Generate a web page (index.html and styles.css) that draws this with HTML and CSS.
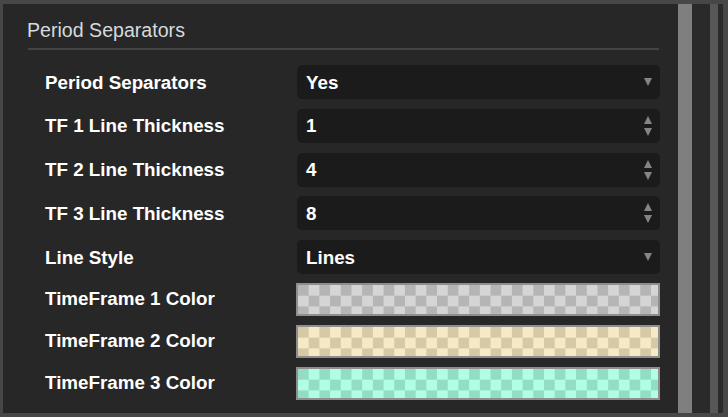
FILE: index.html
```html
<!DOCTYPE html>
<html>
<head>
<meta charset="utf-8">
<link rel="stylesheet" href="styles.css">
</head>
<body>
<div class="frame">
  <div class="panel">
    <div class="section">
      <h2 class="title">Period Separators</h2>
      <div class="rule"></div>
      <div class="rows">
        <div class="row">
          <div class="label">Period Separators</div>
          <div class="control select"><span class="value">Yes</span><span class="caret"></span></div>
        </div>
        <div class="row">
          <div class="label">TF 1 Line Thickness</div>
          <div class="control number"><span class="value">1</span><span class="spin"><span class="up"></span><span class="down"></span></span></div>
        </div>
        <div class="row">
          <div class="label">TF 2 Line Thickness</div>
          <div class="control number"><span class="value">4</span><span class="spin"><span class="up"></span><span class="down"></span></span></div>
        </div>
        <div class="row">
          <div class="label">TF 3 Line Thickness</div>
          <div class="control number"><span class="value">8</span><span class="spin"><span class="up"></span><span class="down"></span></span></div>
        </div>
        <div class="row">
          <div class="label">Line Style</div>
          <div class="control select"><span class="value">Lines</span><span class="caret"></span></div>
        </div>
      </div>
      <div class="rows colors">
        <div class="row color-row">
          <div class="label">TimeFrame 1 Color</div>
          <div class="swatch swatch-gray"></div>
        </div>
        <div class="row color-row">
          <div class="label">TimeFrame 2 Color</div>
          <div class="swatch swatch-cream"></div>
        </div>
        <div class="row color-row">
          <div class="label">TimeFrame 3 Color</div>
          <div class="swatch swatch-mint"></div>
        </div>
      </div>
    </div>
  </div>
  <div class="bar bar-thumb"></div>
  <div class="bar bar-gap"></div>
  <div class="bar bar-outer"></div>
  <div class="bar bar-edge"></div>
</div>
</body>
</html>
```

FILE: styles.css
```css
html, body {
  margin: 0;
  padding: 0;
}
body {
  width: 728px;
  height: 417px;
  overflow: hidden;
  background: #474747;
  font-family: "Liberation Sans", Arial, sans-serif;
}
.frame {
  box-sizing: border-box;
  height: 417px;
  padding: 4px 5px 4px 3px;
  display: flex;
}
.panel {
  flex: 1;
  background: #272727;
  overflow: hidden;
}
.bar { height: 100%; }
.bar-thumb { width: 14px; background: #7f7f7f; }
.bar-gap { width: 18px; background: #2a2a2a; }
.bar-outer { width: 8px; background: #575757; }
.bar-edge { width: 5px; background: #2b2b2b; }

.section {
  margin: 0 19px 0 25px;
}
.title {
  margin: 0 0 0 -1px;
  padding-top: 14px;
  font-weight: normal;
  font-size: 19.6px;
  line-height: 24px;
  color: #d6dadd;
}
.rule {
  height: 2px;
  background: #444444;
  margin-top: 6px;
}
.rows {
  display: flex;
  flex-direction: column;
  gap: 9.75px;
  padding-left: 17px;
}
.rule + .rows { margin-top: 15px; }
.colors { gap: 9px; margin-top: 8.5px; }
.row {
  display: grid;
  grid-template-columns: 252px 363px;
  align-items: center;
  height: 34px;
}
.color-row { height: 33px; }
.label {
  color: #ffffff;
  font-weight: bold;
  font-size: 18.8px;
  white-space: nowrap;
  padding-top: 1px;
}
.color-row .label { padding-top: 0; }
.control {
  box-sizing: border-box;
  height: 34px;
  background: #1b1b1b;
  border-radius: 5px;
  display: flex;
  align-items: center;
  justify-content: space-between;
  padding: 0 8px 0 9px;
}
.value {
  color: #ffffff;
  font-weight: bold;
  font-size: 18.8px;
  padding-top: 1px;
}
.caret {
  width: 0;
  height: 0;
  border-left: 4.5px solid transparent;
  border-right: 4.5px solid transparent;
  border-top: 8px solid #858585;
}
.spin {
  display: flex;
  flex-direction: column;
  gap: 4px;
}
.spin .up, .spin .down {
  width: 0;
  height: 0;
  border-left: 4.5px solid transparent;
  border-right: 4.5px solid transparent;
}
.spin .up { border-bottom: 8px solid #858585; }
.spin .down { border-top: 8px solid #858585; }

.swatch {
  box-sizing: border-box;
  height: 33px;
  margin-left: -1px;
  border: 2px solid #8e8e8e;
  background-size: 21.4px 21.4px;
}
.swatch-gray {
  background-image: conic-gradient(#d5d5d5 0 25%, #b5b5b5 0 50%, #d5d5d5 0 75%, #b5b5b5 0);
}
.swatch-cream {
  background-image: conic-gradient(#f5e9c6 0 25%, #d6caa6 0 50%, #f5e9c6 0 75%, #d6caa6 0);
}
.swatch-mint {
  background-image: conic-gradient(#b1fde5 0 25%, #94ddc5 0 50%, #b1fde5 0 75%, #94ddc5 0);
}
```
